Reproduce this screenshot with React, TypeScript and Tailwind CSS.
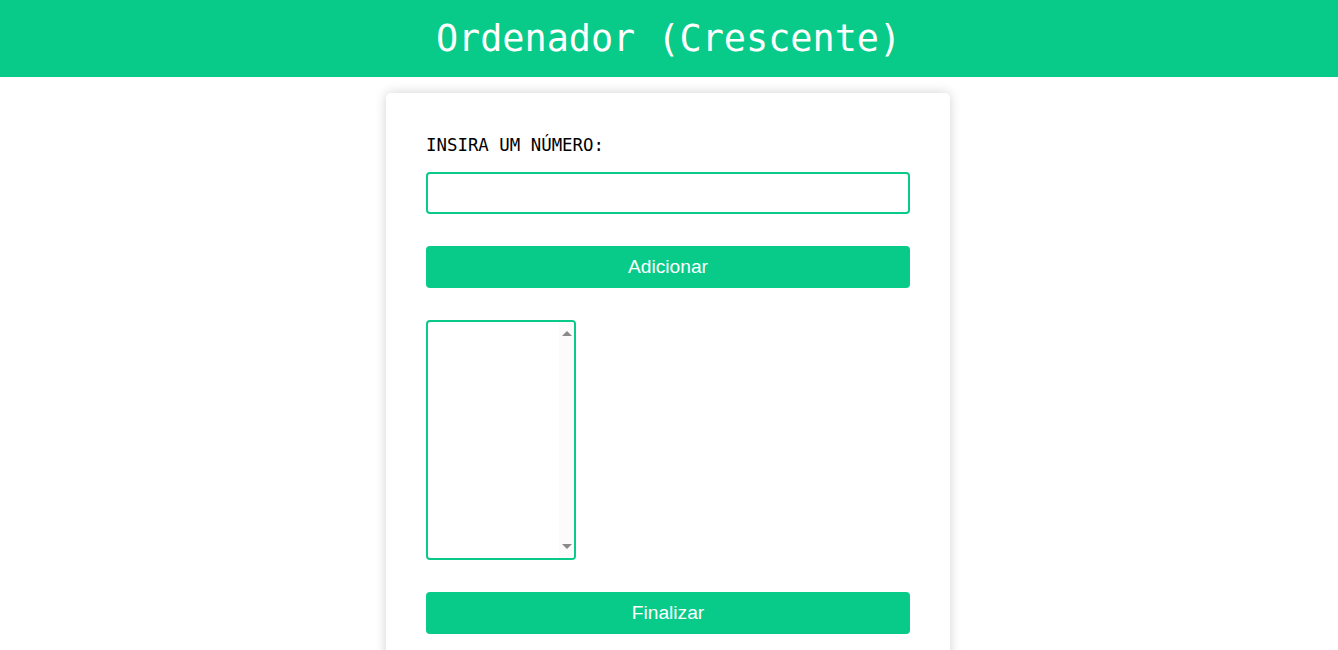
import React from "react";

export default function App() {
  return (
    <div className="min-h-[650px] bg-white" style={{ fontFamily: "'Liberation Sans', Arial, sans-serif" }}>
      <header className="h-[77px] bg-[#08cb8a] flex items-center justify-center pr-[1px]">
        <h1 className="text-white text-[36.8px] leading-none font-['DejaVu_Sans_Mono',monospace] pt-[1px]">
          Ordenador (Crescente)
        </h1>
      </header>
      <main className="flex justify-center pt-[16px] pr-[2px]">
        <div className="w-[564px] bg-white rounded-[5px] shadow-[0_0_12px_rgba(0,0,0,0.18)] px-[40px] pt-[38px] pb-[40px]">
          <label className="block text-[17.4px] leading-[28px] text-black font-['DejaVu_Sans_Mono',monospace]">
            INSIRA UM NÚMERO:
          </label>
          <input
            type="text"
            className="mt-[13px] block w-full h-[42px] border-2 border-[#08cb8a] rounded-[4px] outline-none px-2"
          />
          <button className="mt-[32px] w-full h-[42px] rounded-[4px] bg-[#08cb8a] text-white text-[19.2px]">
            Adicionar
          </button>
          <div className="mt-[32px] w-[150px] h-[240px] border-2 border-[#08cb8a] rounded-[4px] flex justify-end overflow-hidden">
            <div className="w-[15px] h-full bg-[#fbfbfb] flex flex-col items-center justify-between py-[9px]">
              <div className="w-0 h-0 border-l-[5px] border-r-[5px] border-b-[5px] border-l-transparent border-r-transparent border-b-[#8a8a8a]" />
              <div className="w-0 h-0 border-l-[5px] border-r-[5px] border-t-[5px] border-l-transparent border-r-transparent border-t-[#8a8a8a]" />
            </div>
          </div>
          <button className="mt-[32px] w-full h-[42px] rounded-[4px] bg-[#08cb8a] text-white text-[19.2px]">
            Finalizar
          </button>
        </div>
      </main>
    </div>
  );
}
